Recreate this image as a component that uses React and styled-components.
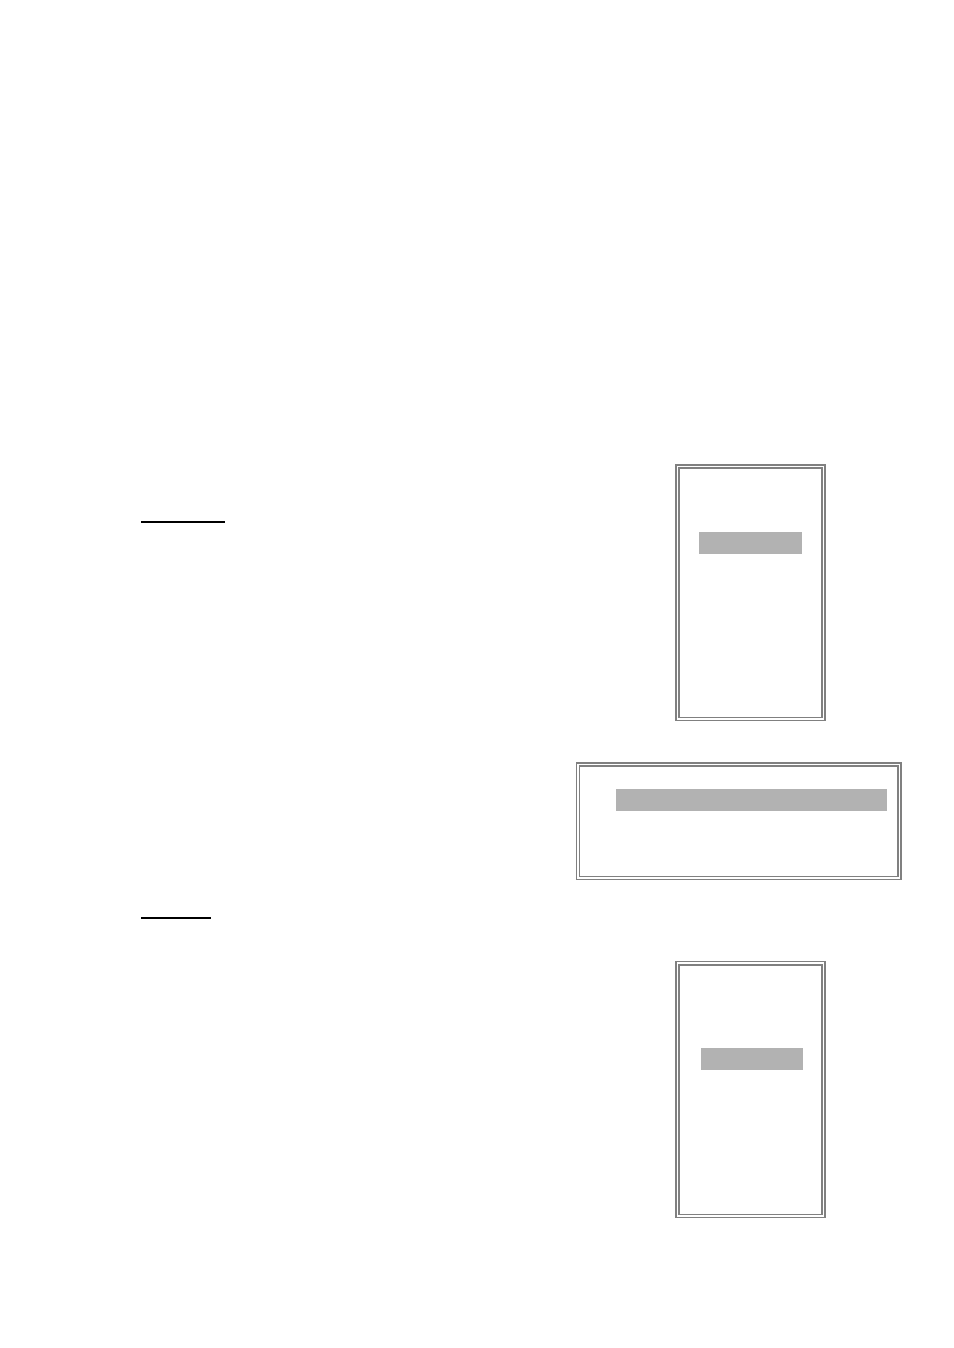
import styled, { createGlobalStyle } from 'styled-components';

const GlobalStyle = createGlobalStyle`
    * {
        box-sizing: border-box;
    }
    body {
        margin: 0;
        background: #ffffff;
        font-family: "Liberation Sans", sans-serif;
    }
`

const Page = styled.main`
    display: flex;
    flex-direction: column;
    gap: 37px;
    padding: 464px 52px 130px 141px;
`

const Section = styled.section`
    display: flex;
    justify-content: space-between;
`

const Rule = styled.hr`
    width: ${({ $width }) => $width};
    height: 2px;
    margin: ${({ $top }) => $top || '0'} 0 0;
    border: 0;
    background: #000000;
`

const Screens = styled.div`
    display: flex;
    flex-direction: column;
    align-items: flex-end;
    gap: 41px;
    padding-top: ${({ $top }) => $top || '0'};
`

// the double frame is two borders with a thin gap between them
const Frame = styled.div`
    width: ${({ $width }) => $width};
    margin-right: ${({ $right }) => $right || '0'};
    padding: ${({ $gap }) => $gap};
    border: solid #808080;
    border-width: ${({ $border }) => $border};
`

const FrameInner = styled.div`
    padding: ${({ $padding }) => $padding};
    border: solid #808080;
    border-width: ${({ $border }) => $border};
`

const Highlight = styled.div`
    height: 22px;
    background: #b2b2b2;
`

function Screen ({ width, right, outer, gap, inner, padding }) {
    return (
        <Frame $width={width} $right={right} $border={outer} $gap={gap}>
            <FrameInner $border={inner} $padding={padding}>
                <Highlight />
            </FrameInner>
        </Frame>
    );
}

function App () {
    return (
        <>
            <GlobalStyle />
            <Page>
                <Section>
                    <Rule $width='84px' $top='57px' />
                    <Screens>
                        <Screen
                            width='151px'
                            right='76px'
                            outer='2px 2px 1px'
                            gap='1px 1px 2px'
                            inner='2px 2px 1px'
                            padding='63px 19px 163px'
                        />
                        <Screen
                            width='326px'
                            outer='2px 2px 1px 1px'
                            gap='1px 1px 2px 2px'
                            inner='2px 2px 1px 1px'
                            padding='22px 10px 65px 36px'
                        />
                    </Screens>
                </Section>
                <Section>
                    <Rule $width='70px' />
                    <Screens $top='44px'>
                        <Screen
                            width='151px'
                            right='76px'
                            outer='1px 2px 1px'
                            gap='2px 1px 2px'
                            inner='2px 2px 1px'
                            padding='82px 18px 144px 21px'
                        />
                    </Screens>
                </Section>
            </Page>
        </>
    );
}
export default App;
